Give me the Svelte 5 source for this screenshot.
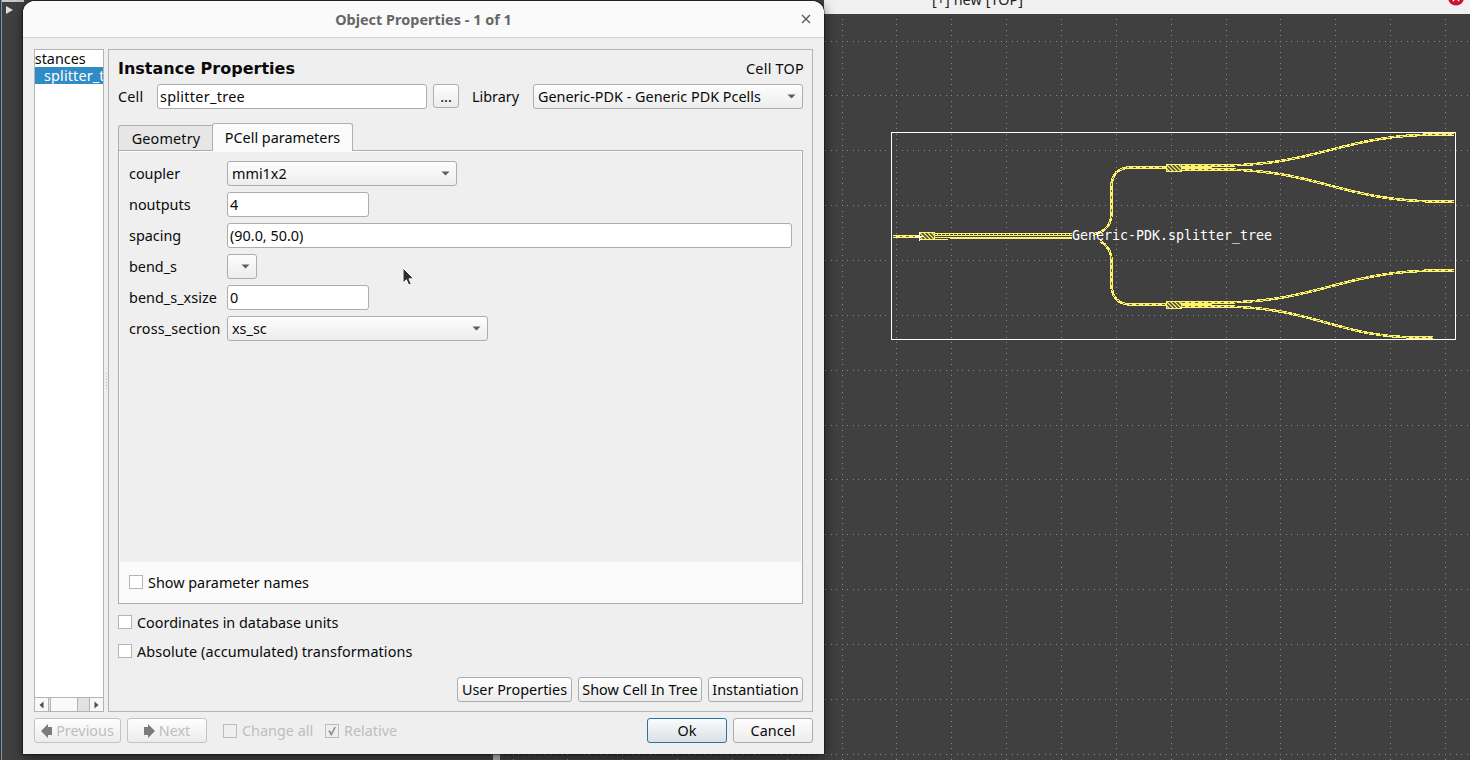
<script>
  const params = [
    { name: 'coupler', kind: 'combo', value: 'mmi1x2', width: 230, ls: 0 },
    { name: 'noutputs', kind: 'text', value: '4', width: 142, ls: 0 },
    { name: 'spacing', kind: 'text', value: '(90.0, 50.0)', width: 565, ls: 0 },
    { name: 'bend_s', kind: 'combo', value: '', width: 30, ls: 0 },
    { name: 'bend_s_xsize', kind: 'text', value: '0', width: 142, ls: 0.03 },
    { name: 'cross_section', kind: 'combo', value: 'xs_sc', width: 261, ls: 0.13 }
  ];

  const pitch = 54.85;
  const x0 = 842.1;
  const y0 = 41.1;
  let dots = '';
  const dot = (x, y) => {
    dots += `M${Math.floor(x)} ${Math.floor(y)}h1v1h-1z`;
  };
  for (let r = 0; r < 14; r++)
    for (let i = -65; i < 116; i++) {
      const x = x0 + (i * pitch) / 10;
      if (x > 823 || r === 13) dot(x, y0 + r * pitch);
    }
  for (let c = 0; c < 12; c++)
    for (let i = -4; i < 132; i++) dot(x0 + c * pitch, y0 + (i * pitch) / 10);
  for (let c = -6; c < 0; c++) dot(x0 + c * pitch, 759);

  const guides = [
    'M893 236.5H919',
    'M1093 234.5C1105 232 1111 226 1111.5 214V187C1111.5 174 1118 167.5 1131 167.5H1166',
    'M1100 241C1107 245 1111.5 251 1111.5 261V284C1111.5 297 1118 304.5 1131 304.5H1166',
    'M1182 165.5H1220C1320 165.5 1340 134.5 1440 134.5H1454',
    'M1182 169.5H1220C1320 169.5 1340 201.5 1440 201.5H1454',
    'M1182 302.5H1220C1320 302.5 1340 270.5 1440 270.5H1454',
    'M1182 306.5H1220C1315 306.5 1335 337.5 1420 337.5H1433'
  ];
  const couplers = [[919, 232], [1166, 164], [1166, 301]];
  const hatch = Array.from({ length: 7 }, (_, i) => `M${i * 4 - 8} 0l8 8`).join('');
</script>

{#snippet arrow()}
  <svg class="arrow" width="9" height="5" viewBox="0 0 9 5"><path d="M.5 .5h8L4.5 4.5z" fill="#5c5c5c" /></svg>
{/snippet}

<div class="desktop">
  <svg class="canvas" width="1470" height="760" viewBox="0 0 1470 760" shape-rendering="crispEdges">
    <rect width="1470" height="760" fill="#404040" />
    <path d={dots} fill="#8c8c8c" />
    <rect x="824" width="646" height="14" fill="#f1f1f1" />
    <rect width="24" height="2" fill="#c9c9c9" />
    <rect width="1" height="760" fill="#25394c" />
    <rect x="1" width="1" height="760" fill="#8a9196" />
    <path d="M6 6l7 4-7 4z" fill="#dedede" shape-rendering="auto" />
    <rect x="493" y="754" width="7" height="6" fill="#b9b9b9" />
    <rect x="891.5" y="132.5" width="564" height="207" fill="none" stroke="#fff" />
    <g fill="none" stroke="#fff26b">
      {#each guides as d}
        <path {d} stroke-width="2.6" />
        <path {d} stroke="#404040" stroke-width=".8" stroke-dasharray="2.5 4" />
      {/each}
      <path d="M935 233.5H1072M935 235.5H1072M935 239.5H948M935 237.5H951M1182 167.5H1212M1182 304.5H1212" />
      <path d="M950 238H1072" stroke-width="2" />
      <path d="M937 234.5H1072" stroke-dasharray="1 3" />
    </g>
    {#each couplers as [x, y]}
      <svg {x} {y} width="16" height="8" viewBox="0 0 16 8">
        <rect width="16" height="8" fill="#404040" />
        <path d={hatch} stroke="#fff26b" stroke-width="1.3" shape-rendering="auto" />
        <rect x=".5" y=".5" width="15" height="7" fill="none" stroke="#fff26b" />
      </svg>
    {/each}
    <path d="M915 236.5h9M919.5 232v9" stroke="#fff" fill="none" />
    <text x="1072" y="240" textLength="200" class="celltext">Generic-PDK.splitter_tree</text>
    <g shape-rendering="auto">
      <circle cx="1456" cy="-2.5" r="8" fill="#c7162b" />
      <path d="M1453.5 1.2V-1M1458.5 1.2V-1" stroke="#fff" stroke-width="1.6" fill="none" />
      <text x="932" y="4.5" textLength="91" class="toptext">[+] new [TOP]</text>
    </g>
  </svg>

  <section class="dialog">
    <header>
      <h1>Object Properties - 1 of 1</h1>
      <svg class="close" width="10" height="10" viewBox="0 0 10 10"><path d="M1 1l8 8M9 1L1 9" stroke="#5a5a5a" stroke-width="1.4" /></svg>
    </header>
    <main>
      <div class="panels">
        <aside>
          <div class="tree">
            <div class="node root"><span>Instances</span></div>
            <div class="node sel"><span>splitter_tree</span></div>
          </div>
          <div class="scroll">
            <i class="btn"><svg width="5" height="8"><path d="M4.5 .5v7L.5 4z" fill="#4d4d4d" /></svg></i>
            <i class="thumb"></i><i class="track"></i>
            <i class="btn"><svg width="5" height="8"><path d="M.5 .5v7L4.5 4z" fill="#4d4d4d" /></svg></i>
          </div>
        </aside>
        <div class="handle"></div>
        <div class="frame">
          <div class="heading"><h2>Instance Properties</h2><span class="top">Cell TOP</span></div>
          <div class="cellrow">
            <label class="lcell" for="cell">Cell</label>
            <div class="field" id="cell">splitter_tree</div>
            <div class="button dotsbtn">...</div>
            <span class="lib">Library</span>
            <div class="combo"><span>Generic-PDK - Generic PDK Pcells</span>{@render arrow()}</div>
          </div>
          <div class="tabs">
            <div class="tab geo"><span>Geometry</span></div>
            <div class="tab active"><span>PCell parameters</span></div>
          </div>
          <div class="pane">
            <div class="params">
              {#each params as p}
                <div class="prow">
                  <span class="pname" style="letter-spacing:{p.ls}px">{p.name}</span>
                  <div class={p.kind === 'combo' ? 'combo' : 'field'} style="width:{p.width}px">
                    <span>{p.value}</span>{#if p.kind === 'combo'}{@render arrow()}{/if}
                  </div>
                </div>
              {/each}
            </div>
            <div class="check show"><i></i><span>Show parameter names</span></div>
          </div>
          <div class="check c1"><i></i><span>Coordinates in database units</span></div>
          <div class="check c2"><i></i><span>Absolute (accumulated) transformations</span></div>
          <div class="actions">
            <div class="button" style="width:115px">User Properties</div>
            <div class="button" style="width:124px">Show Cell In Tree</div>
            <div class="button" style="width:95px">Instantiation</div>
          </div>
        </div>
      </div>
      <footer>
        <div class="button off prev">
          <svg width="11" height="14"><path d="M0 7L7 0v3h4v8H7v3z" fill="#7b7b7b" /></svg><span>Previous</span>
        </div>
        <div class="button off next">
          <svg width="11" height="14"><path d="M11 7L4 0v3H0v8h4v3z" fill="#7b7b7b" /></svg><span>Next</span>
        </div>
        <div class="check off chall"><i></i><span>Change all</span></div>
        <div class="check off rel">
          <i><svg width="12" height="12"><path d="M3 5.5l2.3 4L9.2 2" fill="none" stroke="#8e8e8e" stroke-width="1.6" /></svg></i><span>Relative</span>
        </div>
        <div class="button ok">Ok</div>
        <div class="button cancel">Cancel</div>
      </footer>
    </main>
  </section>

  <svg class="cursor" width="14" height="22" viewBox="0 0 14 22">
    <path d="M1 1v15l3.4-3.2 2.3 5.3 2.6-1.1-2.3-5.2h4.8z" fill="#2f2f2f" stroke="#fff" stroke-width="1" />
  </svg>
</div>

<style>
  :global(body) { margin: 0; overflow: hidden; }
  .desktop {
    position: relative; width: 1470px; height: 760px; overflow: hidden; background: #404040;
    font-family: 'Noto Sans', 'Open Sans', sans-serif; font-size: 14.4px; line-height: 18px; color: #0a0a0a;
    white-space: nowrap;
  }
  .desktop * { box-sizing: border-box; }
  svg { display: block; flex: none; }
  .celltext { font: 13.3px 'DejaVu Sans Mono', monospace; fill: #fff; }
  .toptext { font: 14.4px 'Noto Sans', sans-serif; fill: #222; }
  .dialog {
    position: absolute; left: 23px; top: 1px; width: 801px; height: 753px; background: #efefef;
    border-radius: 12px 12px 0 0; display: flex; flex-direction: column;
    box-shadow: 0 0 1px 1px rgba(0, 0, 0, .4), 0 3px 14px rgba(0, 0, 0, .55);
  }
  header {
    height: 37px; flex: none; background: #fafafa; border-bottom: 1px solid #d2d2d2; border-radius: 12px 12px 0 0;
    display: flex; align-items: center; justify-content: flex-end; padding: 0 13px 0 0;
  }
  h1 { margin: 1px auto 0; padding-left: 23px; font-size: 14.4px; line-height: 18px; font-weight: 700; letter-spacing: .03px; color: #666; }
  main { flex: 1; padding: 11px 11px 0; display: flex; flex-direction: column; }
  .panels { display: flex; height: 663px; }
  aside { width: 70px; border: 1px solid #b4b4b4; background: #fff; display: flex; flex-direction: column; }
  .tree { flex: 1; overflow: hidden; }
  .node { height: 17px; line-height: 17px; overflow: hidden; }
  .root span { display: block; margin-left: -14px; }
  .sel { background: #308cc6; color: #fff; }
  .sel span { padding-left: 9px; letter-spacing: .15px; }
  .scroll { height: 14px; border-top: 1px solid #b4b4b4; display: flex; background: #e2e2e2; }
  .btn { width: 14px; background: #f8f8f8; display: flex; align-items: center; justify-content: center; border-right: 1px solid #b4b4b4; }
  .btn:last-child { border-right: 0; border-left: 1px solid #b4b4b4; }
  .thumb { width: 28px; margin-left: 1px; background: #fafafa; border: solid #b4b4b4; border-width: 0 1px; }
  .track { flex: 1; }
  .handle {
    width: 4px; align-self: center; height: 18px;
    background: linear-gradient(#b9b9b9 1px, transparent 1px) 2px 1px / 1px 3px repeat-y;
  }
  .frame { flex: 1; border: 1px solid #b4b4b4; padding: 0 9px; display: flex; flex-direction: column; }
  .heading { height: 34px; padding-top: 9px; display: flex; justify-content: space-between; align-items: flex-start; line-height: 20px; }
  .top { letter-spacing: .25px; margin-right: -1px; }
  h2 { margin: 0; font: bold 16px/20px 'DejaVu Sans', sans-serif; }
  .cellrow { display: flex; height: 25px; }
  .cellrow label { width: 39px; line-height: 25px; letter-spacing: .2px; }
  .cellrow .field { width: 270px; letter-spacing: .3px; }
  .dotsbtn { width: 26px; height: 24px; margin-left: 6px; }
  .lib { margin-left: 13px; width: 61px; line-height: 25px; }
  .cellrow .combo { width: 270px; }
  .field, .combo, .button { border: 1px solid #adadad; border-radius: 3px; height: 25px; line-height: 23px; }
  .field { background: #fff; padding-left: 2px; }
  .combo { background: linear-gradient(#fdfdfd, #ededed); padding: 0 6px 0 4px; display: flex; align-items: center; justify-content: space-between; }
  .combo .arrow { margin-left: auto; }
  .button { background: linear-gradient(#fefefe, #ececec); display: flex; align-items: center; justify-content: center; }
  .dotsbtn { height: 24px; }
  .tabs { display: flex; height: 28px; margin-top: 14px; align-items: flex-end; position: relative; z-index: 1; }
  .tab { border: 1px solid #b0b0b0; border-bottom: 0; display: flex; justify-content: center; align-items: center; }
  .geo { width: 95px; height: 26px; background: #e6e6e6; border-right: 0; border-radius: 3px 0 0 0; padding-top: 2px; border-bottom: 1px solid #adadad; letter-spacing: .15px; }
  .active { width: 141px; height: 28px; background: #fbfbfb; border-radius: 3px 3px 0 0; margin-left: -1px; }
  .pane { height: 454px; margin-top: -1px; border: 1px solid #adadad; background: #fbfbfb; display: flex; flex-direction: column; padding: 1px 1px 0; }
  .params { height: 410px; background: #efefef; padding: 9px 0 0 9px; display: flex; flex-direction: column; gap: 6px; }
  .prow { display: flex; height: 25px; line-height: 25px; }
  .pname { width: 98px; }
  .prow .combo, .prow .field { line-height: 23px; }
  .check { display: flex; align-items: center; gap: 5px; height: 18px; }
  .check i { width: 14px; height: 14px; background: #fff; border: 1px solid #b4b4b4; flex: none; }
  .show { margin: 11px 0 0 9px; }
  .show span, .c1 span, .c2 span { padding-top: 2px; }
  .c1 { margin-top: 9px; }
  .c2 { margin-top: 11px; letter-spacing: .09px; }
  .actions { margin-top: 17px; display: flex; gap: 6px; justify-content: flex-end; }
  footer { display: flex; align-items: center; margin-top: 6px; height: 25px; }
  .off { color: #bebebe; border-color: #c3c3c3; }
  .off i { background: #efefef; border-color: #bcbcbc; }
  .prev { width: 87px; gap: 4px; }
  .next { width: 80px; gap: 4px; margin-left: 6px; }
  .chall { margin-left: 16px; width: 102px; }
  .rel { width: 322px; }
  .ok { width: 80px; border-color: #2b729e; background: linear-gradient(#fbfcfd, #d9e0e6); }
  .cancel { width: 80px; margin-left: 6px; }
  .cursor { position: absolute; left: 402px; top: 267px; }
</style>
